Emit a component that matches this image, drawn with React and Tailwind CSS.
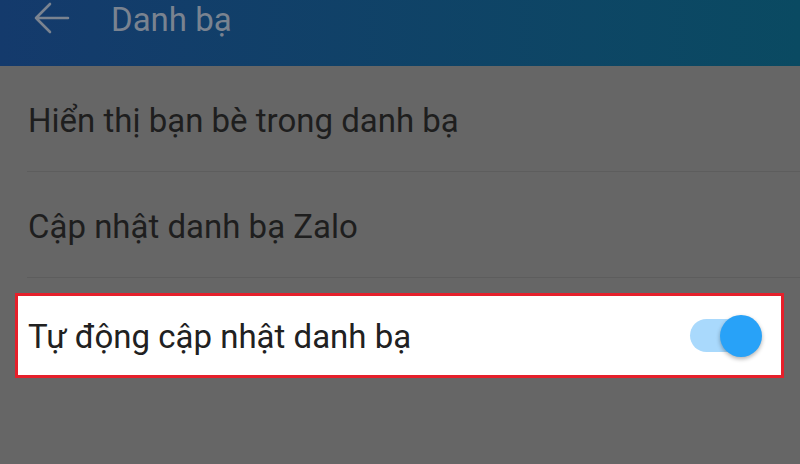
import React from 'react'

function App() {
  return (
    <div className="w-[800px] h-[464px] overflow-hidden bg-[#666666] font-['Roboto',sans-serif]">
      <header className="h-[66px] flex items-start bg-gradient-to-r from-[#143a6c] to-[#0a4a62]">
        <div className="flex items-center h-[36px] pl-[34px]">
          <svg width="36" height="32" viewBox="0 0 36 32" fill="none" stroke="#7a8390" strokeWidth="2.6" strokeLinecap="round" strokeLinejoin="round">
            <path d="M34 16H2M16 2L2 16l14 14" />
          </svg>
          <span className="ml-[41px] text-[33px] leading-none text-[#7a8390] pt-[2px]">Danh bạ</span>
        </div>
      </header>
      <div className="h-[105px] flex items-center pl-[28px] text-[33px] text-[#1e1e1e] pt-[4px]">
        Hiển thị bạn bè trong danh bạ
      </div>
      <div className="ml-[27px] h-px bg-[#5d5d5d]" />
      <div className="h-[105px] flex items-center pl-[28px] text-[33px] text-[#1e1e1e] pt-[4px]">
        Cập nhật danh bạ Zalo
      </div>
      <div className="ml-[27px] h-px bg-[#5d5d5d]" />
      <div className="mt-[15px] ml-[15px] w-[769px] h-[85px] border-[3px] border-[#e5202b] bg-white flex items-center justify-between pl-[10px] pr-[19px]">
        <span className="text-[33px] text-[#212121] pt-[2px]">Tự động cập nhật danh bạ</span>
        <div className="relative w-[75px] h-[42px] flex items-center">
          <div className="ml-[3px] w-[54px] h-[33px] rounded-full bg-[#a9d9fc]" />
          <div className="absolute right-0 top-0 w-[42px] h-[42px] rounded-full bg-[#28a2f8] shadow-[0_2px_4px_rgba(0,0,0,0.3)]" />
        </div>
      </div>
    </div>
  )
}

export default App
